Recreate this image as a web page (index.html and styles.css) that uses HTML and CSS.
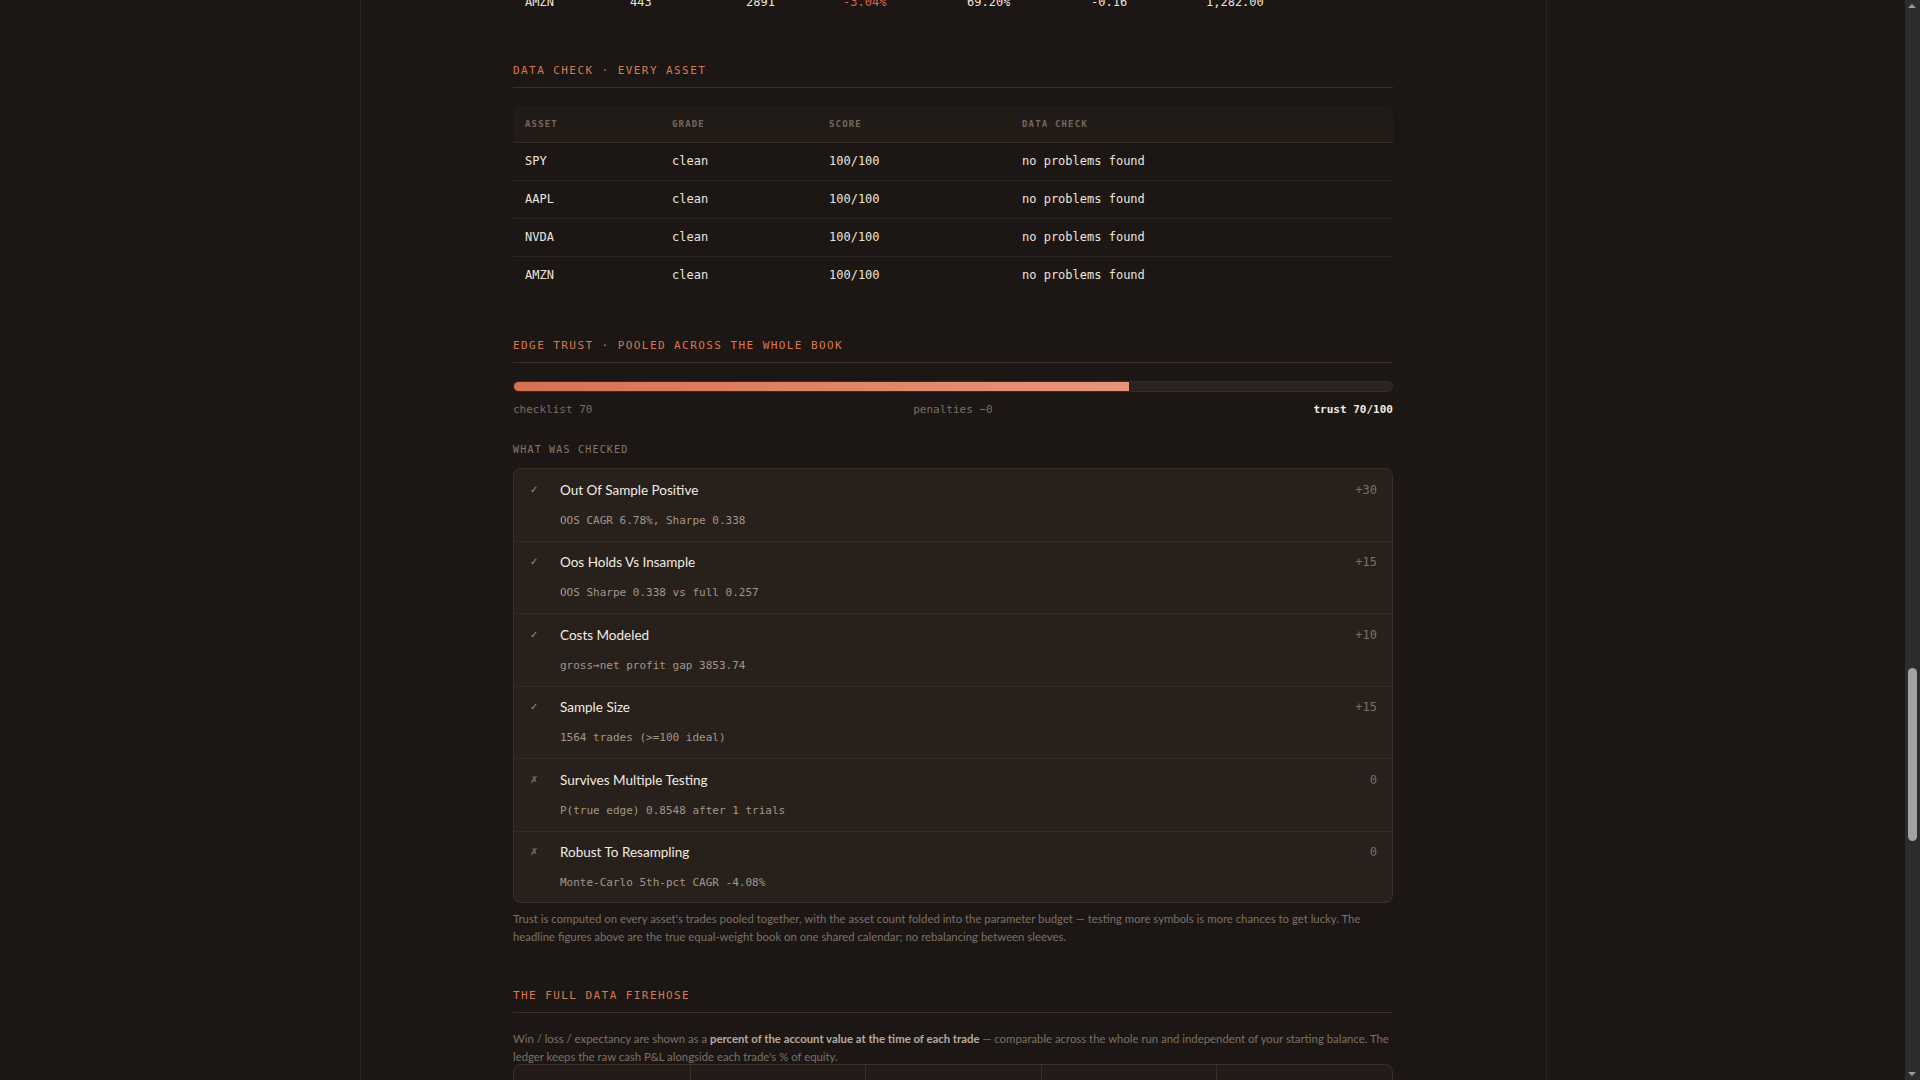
FILE: index.html
```html
<!DOCTYPE html>
<html lang="en">
    <head>
        <meta charset="UTF-8">
        <meta name="viewport" content="width=device-width, initial-scale=1.0">
        <title>Backtest report</title>
        <link rel="stylesheet" href="styles.css">
    </head>

    <body>

        <div class="page">
        <main class="report">

            <div class="report-top"></div>

            <table class="asset-table mono">
                <colgroup>
                    <col style="width: 105px">
                    <col style="width: 116px">
                    <col style="width: 97px">
                    <col style="width: 124px">
                    <col style="width: 124px">
                    <col style="width: 115px">
                    <col>
                </colgroup>
                <tr>
                    <td>AMZN</td>
                    <td>443</td>
                    <td>2891</td>
                    <td class="neg">-3.04%</td>
                    <td>69.20%</td>
                    <td>-0.16</td>
                    <td>1,282.00</td>
                </tr>
            </table>

            <!-- Проверка данных -->

            <section class="block">
                <h2 class="block-title">Data check · every asset</h2>

                <table class="check-table mono">
                    <colgroup>
                        <col style="width: 147px">
                        <col style="width: 157px">
                        <col style="width: 193px">
                        <col>
                    </colgroup>
                    <thead>
                        <tr>
                            <th>Asset</th>
                            <th>Grade</th>
                            <th>Score</th>
                            <th>Data check</th>
                        </tr>
                    </thead>
                    <tbody>
                        <tr><td>SPY</td><td>clean</td><td>100/100</td><td>no problems found</td></tr>
                        <tr><td>AAPL</td><td>clean</td><td>100/100</td><td>no problems found</td></tr>
                        <tr><td>NVDA</td><td>clean</td><td>100/100</td><td>no problems found</td></tr>
                        <tr><td>AMZN</td><td>clean</td><td>100/100</td><td>no problems found</td></tr>
                    </tbody>
                </table>
            </section>

            <!-- Доверие к стратегии -->

            <section class="block">
                <h2 class="block-title">Edge trust · pooled across the whole book</h2>

                <div class="trust-bar">
                    <div class="trust-fill" style="width: 70%"></div>
                </div>
                <div class="trust-scale mono">
                    <span>checklist 70</span>
                    <span>penalties −0</span>
                    <span class="trust-total">trust 70/100</span>
                </div>

                <div class="checked-label mono">What was checked</div>

                <div class="checklist">
                    <div class="check">
                        <span class="check-mark">✓</span>
                        <span class="check-name">Out Of Sample Positive</span>
                        <span class="check-points mono">+30</span>
                        <div class="check-detail mono">OOS CAGR 6.78%, Sharpe 0.338</div>
                    </div>
                    <div class="check">
                        <span class="check-mark">✓</span>
                        <span class="check-name">Oos Holds Vs Insample</span>
                        <span class="check-points mono">+15</span>
                        <div class="check-detail mono">OOS Sharpe 0.338 vs full 0.257</div>
                    </div>
                    <div class="check">
                        <span class="check-mark">✓</span>
                        <span class="check-name">Costs Modeled</span>
                        <span class="check-points mono">+10</span>
                        <div class="check-detail mono">gross→net profit gap 3853.74</div>
                    </div>
                    <div class="check">
                        <span class="check-mark">✓</span>
                        <span class="check-name">Sample Size</span>
                        <span class="check-points mono">+15</span>
                        <div class="check-detail mono">1564 trades (&gt;=100 ideal)</div>
                    </div>
                    <div class="check">
                        <span class="check-mark fail">✗</span>
                        <span class="check-name">Survives Multiple Testing</span>
                        <span class="check-points mono">0</span>
                        <div class="check-detail mono">P(true edge) 0.8548 after 1 trials</div>
                    </div>
                    <div class="check">
                        <span class="check-mark fail">✗</span>
                        <span class="check-name">Robust To Resampling</span>
                        <span class="check-points mono">0</span>
                        <div class="check-detail mono">Monte-Carlo 5th-pct CAGR -4.08%</div>
                    </div>
                </div>

                <p class="note">Trust is computed on every asset's trades pooled together, with the asset count folded into the parameter budget — testing more symbols is more chances to get lucky. The headline figures above are the true equal-weight book on one shared calendar; no rebalancing between sleeves.</p>
            </section>

            <!-- Все данные -->

            <section class="block">
                <h2 class="block-title">The full data firehose</h2>

                <p class="note note-lead">Win / loss / expectancy are shown as a <b>percent of the account value at the time of each trade</b> — comparable across the whole run and independent of your starting balance. The ledger keeps the raw cash P&amp;L alongside each trade's % of equity.</p>

                <div class="stat-grid">
                    <div class="stat">
                        <span class="stat-label mono">Trades</span>
                        <span class="stat-value mono">1564</span>
                    </div>
                    <div class="stat">
                        <span class="stat-label mono">Win rate</span>
                        <span class="stat-value mono">—</span>
                    </div>
                    <div class="stat">
                        <span class="stat-label mono">Avg win</span>
                        <span class="stat-value mono">—</span>
                    </div>
                    <div class="stat">
                        <span class="stat-label mono">Avg loss</span>
                        <span class="stat-value mono">—</span>
                    </div>
                    <div class="stat">
                        <span class="stat-label mono">Expectancy</span>
                        <span class="stat-value mono">—</span>
                    </div>
                </div>
            </section>

        </main>
        </div>

        <!-- Полоса прокрутки окна -->

        <div class="scroll-rail" aria-hidden="true">
            <span class="scroll-arrow up"></span>
            <span class="scroll-thumb"></span>
            <span class="scroll-arrow down"></span>
        </div>

    <script>

        // Открываем отчёт на блоке доверия

        const assetTable = document.querySelector('.asset-table');
        const tableBottom = assetTable.getBoundingClientRect().bottom + window.scrollY;
        window.scrollTo(0, tableBottom - 21);

    </script>

    </body>

</html>
```

FILE: styles.css
```css
html {
    color-scheme: dark;
    background: #1c1714;
}

body {
    margin: 0 14px 0 0;
    background: #1c1714;
    color: #ece4da;
    font-family: "Lato", "Noto Sans", sans-serif;
}

.mono {
    font-family: "DejaVu Sans Mono", monospace;
}

/* Колонка страницы */

.page {
    box-sizing: border-box;
    max-width: 1187px;
    min-height: 6593px;
    margin: 0 auto;
    border-left: 1px solid #2c2621;
    border-right: 1px solid #2c2621;
}

.report {
    max-width: 880px;
    margin: 0 auto;
}

.report-top {
    height: 4082px;
}

/* Таблица по активам */

.asset-table {
    width: 100%;
    table-layout: fixed;
    border-collapse: separate;
    border-spacing: 0;
    font-size: 12px;
}

.asset-table td {
    padding: 10px 12px;
    line-height: 18px;
    color: #ece4da;
}

.asset-table .neg {
    color: #e0644f;
}

/* Заголовки блоков */

.block {
    margin-top: 43px;
}

.block-title {
    margin: 0 0 17.5px;
    padding-bottom: 9px;
    border-bottom: 1px solid #383029;
    font-family: "DejaVu Sans Mono", monospace;
    font-size: 11px;
    font-weight: normal;
    line-height: 14px;
    letter-spacing: 0.13em;
    text-transform: uppercase;
    color: #d9774f;
}

/* Проверка данных */

.check-table {
    width: 100%;
    table-layout: fixed;
    border-collapse: separate;
    border-spacing: 0;
    font-size: 12px;
}

.check-table th {
    padding: 12px;
    line-height: 12px;
    font-size: 9px;
    font-weight: bold;
    letter-spacing: 0.13em;
    text-align: left;
    text-transform: uppercase;
    color: #75695e;
    background: #211b17;
    border-bottom: 1px solid #342b24;
}

.check-table th:first-child {
    border-top-left-radius: 7px;
}

.check-table th:last-child {
    border-top-right-radius: 7px;
}

.check-table td {
    padding: 10px 12px;
    line-height: 17px;
    color: #ece4da;
    border-bottom: 1px solid #2a231e;
}

.check-table tr:last-child td {
    padding-bottom: 12.5px;
    border-bottom: none;
}

/* Шкала доверия */

.trust-bar {
    height: 9px;
    margin-top: 3px;
    background: #2b231e;
    border: 1px solid #352c26;
    border-radius: 6px;
    overflow: hidden;
}

.trust-fill {
    height: 100%;
    background: linear-gradient(90deg, #d6714f, #e9947a);
}

.trust-scale {
    display: flex;
    justify-content: space-between;
    margin-top: 11.5px;
    font-size: 11px;
    line-height: 14px;
    color: #7a6e63;
}

.trust-total {
    font-weight: bold;
    color: #f2eadf;
}

.checked-label {
    margin: 26px 0 12px;
    font-size: 10px;
    line-height: 13px;
    letter-spacing: 0.12em;
    text-transform: uppercase;
    color: #85796d;
}

/* Список проверок */

.checklist {
    background: #28201b;
    border: 1px solid #3a3029;
    border-radius: 8px;
}

.check {
    display: grid;
    grid-template-columns: 30px 1fr auto;
    padding: 11.5px 15px 12px 16px;
}

.check:last-child {
    padding-bottom: 10.5px;
}

.check + .check {
    border-top: 1px solid #332a23;
}

.check-mark {
    font-family: "DejaVu Sans", sans-serif;
    font-size: 10px;
    line-height: 18px;
    color: #82a078;
}

.check-mark.fail {
    color: #7b7068;
}

.check-name {
    font-size: 13.5px;
    line-height: 18px;
    color: #f2ebe1;
}

.check-points {
    font-size: 12px;
    line-height: 18px;
    text-align: right;
    color: #7b7066;
}

.check-detail {
    grid-column: 2 / 4;
    margin-top: 14px;
    font-size: 11px;
    line-height: 16px;
    color: #a3978b;
}

/* Пояснения */

.note {
    margin: 7px 0 0;
    font-size: 11.35px;
    line-height: 18px;
    color: #7c7166;
}

.note b {
    color: #b6aa9d;
}

.note-lead {
    margin: 0 0 -2px;
}

/* Сводка сделок */

.stat-grid {
    display: grid;
    grid-template-columns: repeat(5, 1fr);
    background: #221b17;
    border: 1px solid #3a3029;
    border-radius: 8px;
}

.stat {
    display: flex;
    flex-direction: column;
    gap: 6px;
    padding: 14px 16px;
}

.stat + .stat {
    border-left: 1px solid #3a3029;
}

.stat-label {
    font-size: 9px;
    letter-spacing: 0.13em;
    text-transform: uppercase;
    color: #75695e;
}

.stat-value {
    font-size: 16px;
    color: #ece4da;
}

/* Полоса прокрутки */

.scroll-rail {
    position: fixed;
    top: 0;
    right: 0;
    width: 15px;
    height: 100vh;
    background: #2c2c2c;
}

.scroll-thumb {
    position: absolute;
    top: 668px;
    left: 3px;
    width: 9px;
    height: 173px;
    background: #a1a1a1;
    border-radius: 5px;
}

.scroll-arrow {
    position: absolute;
    left: 3px;
    width: 0;
    height: 0;
    border-left: 4.5px solid transparent;
    border-right: 4.5px solid transparent;
}

.scroll-arrow.up {
    top: 4px;
    border-bottom: 4px solid #9a9a9a;
}

.scroll-arrow.down {
    bottom: 4px;
    border-top: 4px solid #9a9a9a;
}
```
